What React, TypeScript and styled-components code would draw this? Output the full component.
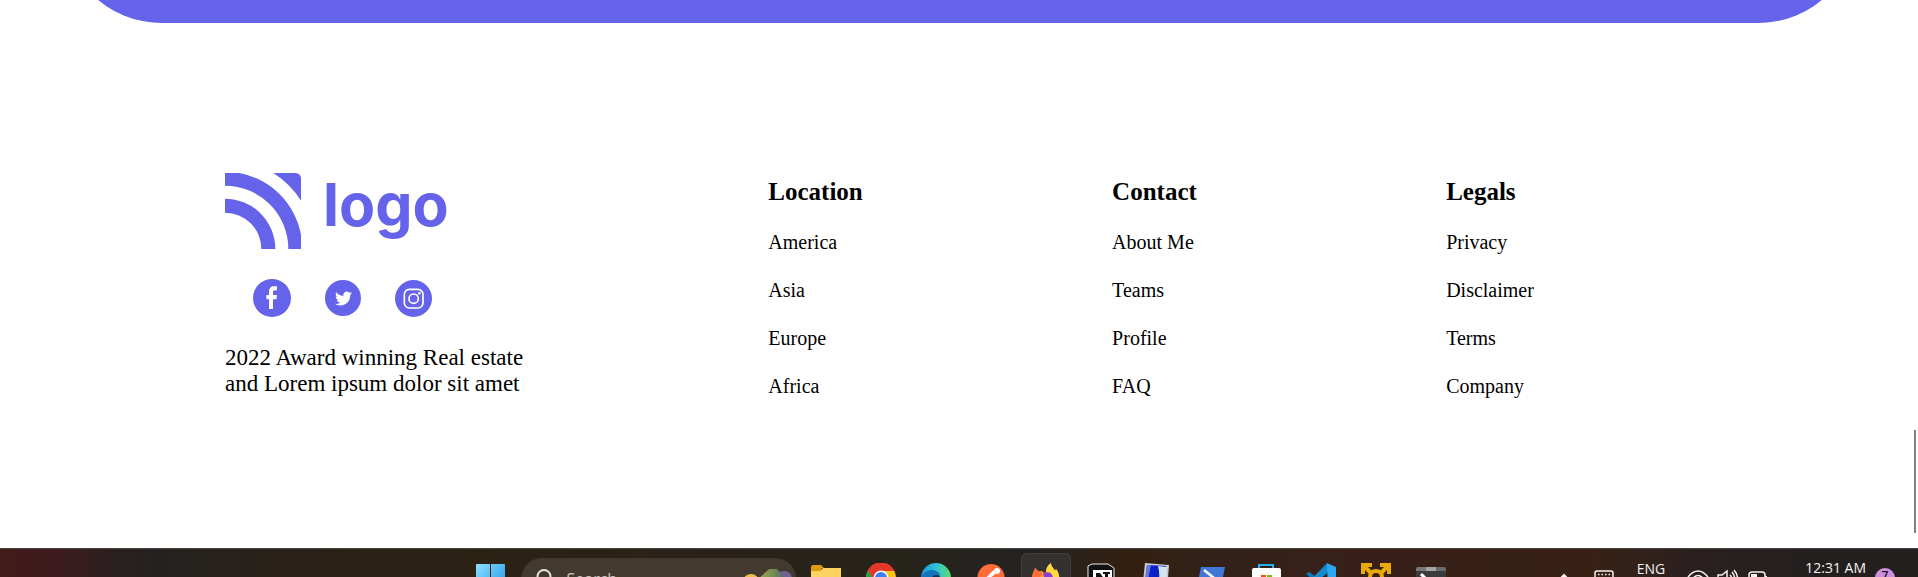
import React from "react";
import styled, { createGlobalStyle } from "styled-components";
import { FaTwitter } from "react-icons/fa";

const brand = "#6563ea";

const GlobalStyle = createGlobalStyle`
  *, *::before, *::after { box-sizing: border-box; }
  body {
    margin: 0;
    background: #fff;
    color: #000;
    font-family: "Liberation Serif", "Times New Roman", serif;
    overflow: hidden;
  }
  h2, p, ul { margin: 0; padding: 0; }
  ul { list-style: none; }
  button { border: 0; padding: 0; background: none; font: inherit; color: inherit; }
  svg { display: block; flex: none; }
`;

const Banner = styled.div`
  height: 23px;
  margin: 0 60px 0 62px;
  overflow: hidden;
  display: flex;
  align-items: flex-end;
`;

const BannerFill = styled.div`
  flex: 1;
  height: 200px;
  border-radius: 100px;
  background: ${brand};
`;

const Footer = styled.footer`
  display: flex;
  gap: 13vw;
  padding: 150px 64px 150px 225px;
`;

const Brand = styled.section`
  flex: none;
  width: 294px;
  display: flex;
  flex-direction: column;
`;

const Logo = styled.a`
  display: flex;
  align-items: flex-start;
  gap: 22px;
  height: 76px;
  color: ${brand};
  text-decoration: none;
`;

const LogoText = styled.span`
  font: 700 59px/64px Inter, sans-serif;
`;

const Socials = styled.nav`
  display: flex;
  align-items: center;
  gap: 34px;
  height: 38px;
  margin: 30px 0 28px;
  padding-left: 28px;
`;

const SocialLink = styled.a<{ $size: number }>`
  display: flex;
  align-items: center;
  justify-content: center;
  width: ${(p) => p.$size}px;
  height: ${(p) => p.$size}px;
  border-radius: 50%;
  background: ${brand};
  color: #fff;
`;

const Blurb = styled.p`
  font-size: 23px;
  line-height: 26px;
  white-space: nowrap;
`;

const Column = styled.nav`
  flex: none;
  padding-top: 5px;
`;

const ColumnTitle = styled.h2`
  font-size: 25px;
  line-height: 28px;
  font-weight: 700;
`;

const LinkList = styled.ul`
  display: flex;
  flex-direction: column;
  gap: 24px;
  margin-top: 24px;
  width: 0;
  white-space: nowrap;
`;

const FooterLink = styled.a`
  display: block;
  font-size: 20px;
  line-height: 24px;
  color: inherit;
  text-decoration: none;
`;

const ScrollThumb = styled.div`
  position: fixed;
  right: 2px;
  bottom: 44px;
  width: 2px;
  height: 103px;
  background: #808080;
`;

const Taskbar = styled.div`
  display: grid;
  grid-template-columns: 1fr auto 1fr;
  height: 29px;
  padding-left: 3px;
  overflow: hidden;
  border-top: 1px solid #4b4542;
  background: linear-gradient(90deg, #421b19 0%, #3d1b1f 3%, #2a201f 6%, #242220 8%, #2b2118 16%, #2c2214 25%, #2a221a 38%, #27241c 47%, #242322 54%, #34200f 59%, #33211a 63%, #38201a 70%, #372014 80%, #382114 83%, #2b2020 88%, #231f1f 95%, #231f1f 100%);
  color: #f4f1f0;
  font-family: "Open Sans", sans-serif;
`;

const Apps = styled.div`
  grid-column: 2;
  display: flex;
  align-items: flex-start;
  gap: 5px;
  padding-top: 4px;
`;

const AppButton = styled.button<{ $active?: boolean }>`
  display: flex;
  justify-content: center;
  width: 50px;
  height: 50px;
  padding-top: 10px;
  border-radius: 6px;
  background: ${(p) => (p.$active ? "#343231" : "transparent")};
  box-shadow: ${(p) => (p.$active ? "inset 0 0 0 1px #403d3c" : "none")};
`;

const Search = styled.label`
  display: flex;
  align-items: flex-start;
  width: 275px;
  height: 42px;
  margin-top: 5px;
  padding: 11px 2px 0 15px;
  border-radius: 21px;
  background: #433a2f;
`;

const SearchInput = styled.input`
  flex: 1;
  min-width: 0;
  height: 20px;
  margin: 0;
  padding: 0 0 0 15px;
  border: 0;
  background: none;
  font: 16px/20px "Open Sans", sans-serif;
  outline: 0;
  &::placeholder { color: #c9c5c1; opacity: 1; }
`;

const Tray = styled.div`
  grid-column: 3;
  justify-self: end;
  display: flex;
  align-items: flex-start;
  padding-right: 23px;
  font-size: 14px;
  line-height: 20px;
`;

const TrayButton = styled.button<{ $gap?: number; $top: number }>`
  margin-left: ${(p) => p.$gap ?? 0}px;
  padding-top: ${(p) => p.$top}px;
  white-space: nowrap;
`;

const Badge = styled.span`
  display: block;
  width: 20px;
  height: 20px;
  border-radius: 50%;
  background: #d08fdd;
  color: #1a1418;
  font-size: 12px;
  font-weight: 600;
  line-height: 16px;
  text-align: center;
`;

const columns = [
  { title: "Location", links: ["America", "Asia", "Europe", "Africa"] },
  { title: "Contact", links: ["About Me", "Teams", "Profile", "FAQ"] },
  { title: "Legals", links: ["Privacy", "Disclaimer", "Terms", "Company"] },
];

const LogoMark = () => (
  <svg width="76" height="76" viewBox="0 0 228 228" fill="currentColor" aria-hidden="true">
    <path d="M0 0H43A232 232 0 0 1 228 185V228H190A190 190 0 0 0 0 38Z" />
    <path d="M0 77A151 151 0 0 1 151 228H109A109 109 0 0 0 0 119Z" />
    <path d="M145 0H212A16 16 0 0 1 228 16V83A270 270 0 0 0 145 0Z" />
  </svg>
);

const FacebookIcon = () => (
  <svg width="38" height="38" viewBox="0 0 114 114" fill="#fff" aria-hidden="true">
    <path d="M48 90V61H40V48H48V39C48 28 54 22 63 22H72V34H67C62 34 60 36 60 40V48H72L70 61H60V90Z" />
  </svg>
);

const InstagramIcon = () => (
  <svg width="37" height="37" viewBox="0 0 111 111" fill="none" stroke="#fff" strokeWidth="5" aria-hidden="true">
    <rect x="28" y="28" width="56" height="56" rx="15" />
    <circle cx="56" cy="56" r="14" />
    <circle cx="73" cy="40" r="4" fill="#fff" stroke="none" />
  </svg>
);

const icon = (body: React.ReactNode, viewBox = "0 0 30 30") => (
  <svg width="30" height="30" viewBox={viewBox} aria-hidden="true">{body}</svg>
);

const apps: { name: string; active?: boolean; art: React.ReactNode }[] = [
  {
    name: "File Explorer",
    art: icon(<><path d="M0 4a2 2 0 0 1 2-2h8l3 3h-2l-2 4H0Z" fill="#dd9c0b" /><path d="M0 8h9l3-3h18v22H0Z" fill="#fdd45f" /></>),
  },
  {
    name: "Chrome",
    art: icon(<><circle cx="15" cy="15" r="15" fill="#f9c513" /><path d="M1.500 8A15 15 0 0 1 28.500 8H15L9 18Z" fill="#e3372b" /><path d="M2 7.500A15 15 0 0 0 14 30L9 18Z" fill="#2b9b48" /><circle cx="15" cy="15" r="7.500" fill="#fff" /><circle cx="15" cy="15" r="6" fill="#3c7ff0" /></>),
  },
  {
    name: "Edge",
    art: icon(<><defs><linearGradient id="edge" x1="0" x2="1"><stop offset="0" stopColor="#1a94dd" /><stop offset=".5" stopColor="#2fc1d6" /><stop offset="1" stopColor="#5cde67" /></linearGradient></defs><circle cx="15" cy="15" r="15" fill="url(#edge)" /><path d="M0 16C1 10 6 7 12 7C18 8 20 12 19 16Z" fill="#1273bd" /><path d="M11 15C11 12 18 10 19 15Z" fill="#14334d" /></>),
  },
  {
    name: "Postman",
    art: icon(<><circle cx="15" cy="14.500" r="13.500" fill="#ff6c37" /><circle cx="21" cy="8" r="3" fill="#fff" /><path d="M19 10l-9 7M18 8l-7 7" stroke="#fff" strokeWidth="2" /></>),
  },
  {
    name: "Firefox",
    active: true,
    art: icon(<><path d="M1 15C1 11 3 9 4 5L7 8H11L13 10L15 9C15 5 17 2 20 0C20 4 23 5 24 8L25 6C28 10 29 15 28 20H1Z" fill="#ff9c2c" /><path d="M20 0C20 4 23 5 24 8L25 6C28 10 29 15 28 20H23C24 12 17 9 15 9C15 5 17 2 20 0Z" fill="#ffd93f" /><path d="M1 15C1 11 3 9 4 5L7 8H10L11 12L6 16Z" fill="#ff6b34" /><path d="M12 11C17 7 22 10 22 16H14Z" fill="#883bd8" /></>),
  },
  {
    name: "Notion",
    art: icon(<><path d="M2 3L6 1L22 1L28 5V28H2Z" fill="#111" stroke="#eee" /><path d="M7 7H26V28H7Z" fill="#fff" /><path d="M10 10H14L19 17V11H17V9H24V11H22V28H19L13 18V28H10V12Z" fill="#111" /></>),
  },
  {
    name: "Database console",
    art: icon(<><path d="M4 0L28 2L26 28H1Z" fill="#c9c9d0" /><path d="M6 2L25 3L24 28H3Z" fill="#0b22c9" /><path d="M17 3L26 4L24 28H14C19 18 19 11 17 3Z" fill="#d7e2f4" /><path d="M6 2L10 2L7 17L3 22Z" fill="#6476e0" /></>),
  },
  {
    name: "PowerShell",
    art: icon(<><path d="M5 4H29L24 28H0Z" fill="#3f78d4" /><path d="M8 7L18 15L6 24" fill="none" stroke="#fff" strokeWidth="2.500" /></>),
  },
  {
    name: "Microsoft Store",
    art: icon(<><path d="M8 7V2H22V7" fill="none" stroke="#27b1ea" strokeWidth="2" /><rect x="1" y="5" width="29" height="25" rx="2" fill="#fff" /><path d="M10 12h5v5h-5z" fill="#ee4f24" /><path d="M16 12h5v5h-5z" fill="#7db904" /></>),
  },
  {
    name: "VS Code",
    art: icon(<><path d="M0 11L3 9L30 27L22 30Z" fill="#0b78bd" /><path d="M1 21L21 0L24 8L5 23Z" fill="#148ad0" /><path d="M21 0L30 4V26L22 30Z" fill="#2aa7ef" /></>),
  },
  {
    name: "Network tool",
    art: icon(<><g fill="#e9ab06"><path d="M0 0H11V4H7L11 8L8 11L4 7V11H0Z" /><path d="M30 0H19V4H23L19 8L22 11L26 7V11H30Z" /></g><circle cx="15" cy="14" r="6" fill="none" stroke="#e9ab06" strokeWidth="4" /></>),
  },
  {
    name: "Terminal",
    art: icon(<><path d="M0 6a2 2 0 0 1 2-2h8v4H0Z" fill="#777" /><path d="M10 4h10v4H10Z" fill="#a4a4a4" /><path d="M20 4h8a2 2 0 0 1 2 2v2H20Z" fill="#6b6b6b" /><path d="M0 8H30V28H0Z" fill="#3c3b3b" /><path d="M5 11l6 6-6 6" fill="none" stroke="#fff" strokeWidth="3" /></>),
  },
];

const App = () => (
  <>
    <GlobalStyle />
    <main>
      <Banner><BannerFill /></Banner>
      <Footer>
        <Brand>
          <Logo href="#">
            <LogoMark />
            <LogoText>logo</LogoText>
          </Logo>
          <Socials aria-label="Social media">
            <SocialLink $size={38} href="#" aria-label="Facebook"><FacebookIcon /></SocialLink>
            <SocialLink $size={36} href="#" aria-label="Twitter"><FaTwitter size={17} /></SocialLink>
            <SocialLink $size={37} href="#" aria-label="Instagram"><InstagramIcon /></SocialLink>
          </Socials>
          <Blurb>2022 Award winning Real estate<br />and Lorem ipsum dolor sit amet</Blurb>
        </Brand>
        {columns.map((column) => (
          <Column key={column.title} aria-label={column.title}>
            <ColumnTitle>{column.title}</ColumnTitle>
            <LinkList>
              {column.links.map((link) => (
                <li key={link}><FooterLink href="#">{link}</FooterLink></li>
              ))}
            </LinkList>
          </Column>
        ))}
      </Footer>
    </main>
    <ScrollThumb />
    <Taskbar>
      <Apps>
        <AppButton aria-label="Start">
          {icon(<><defs><linearGradient id="win" x1="0" x2="1" y1="0" y2="1"><stop offset="0" stopColor="#8fe1fc" /><stop offset="1" stopColor="#1491e8" /></linearGradient></defs><path d="M1 2a1 1 0 0 1 1-1h13v14H1ZM16 1h13a1 1 0 0 1 1 1v13H16ZM1 16h14v14H1ZM16 16h14v14H16Z" fill="url(#win)" /></>, "1 0 30 30")}
        </AppButton>
        <Search>
          <svg width="16" height="18" viewBox="0 0 16 18" fill="none" stroke="#e6e3e0" strokeWidth="2" aria-hidden="true"><circle cx="8" cy="7.500" r="6.500" /><path d="M4 12l-4 5" /></svg>
          <SearchInput type="text" placeholder="Search" aria-label="Search" />
          <svg width="52" height="31" viewBox="0 0 52 31" aria-hidden="true">
            <defs><linearGradient id="hill" x1="0" x2="1"><stop offset="0" stopColor="#b7ad49" /><stop offset=".5" stopColor="#7c944f" /><stop offset="1" stopColor="#4f6075" /></linearGradient></defs>
            <circle cx="42" cy="10" r="8" fill="#6c6595" />
            <path d="M15 11L26 1Q31-3 36 1L46 12V31H10Z" fill="url(#hill)" />
            <circle cx="9" cy="13" r="8" fill="#efbd4c" />
          </svg>
        </Search>
        {apps.map((app) => (
          <AppButton key={app.name} $active={app.active} aria-label={app.name}>{app.art}</AppButton>
        ))}
      </Apps>
      <Tray>
        <TrayButton $top={24} aria-label="Hidden icons">
          <svg width="12" height="8" viewBox="0 0 12 8" fill="none" stroke="currentColor" strokeWidth="2"><path d="M1 7l5-5 5 5" /></svg>
        </TrayButton>
        <TrayButton $top={21} $gap={24} aria-label="Touch keyboard">
          <svg width="20" height="16" viewBox="0 0 20 16" fill="none" stroke="currentColor" strokeWidth="1.500"><rect x="1" y="1" width="18" height="14" rx="2" /><path d="M4 4.500h13M4 8h13" strokeDasharray="1.500 2" /></svg>
        </TrayButton>
        <TrayButton $top={10} $gap={23}>ENG</TrayButton>
        <TrayButton $top={21} $gap={22} aria-label="Network">
          <svg width="22" height="16" viewBox="0 0 22 16" fill="none" stroke="currentColor" strokeWidth="1.500"><path d="M1 7Q11-5 21 7M4.500 10Q11 1 17.500 10M8 13Q11 8 14 13" /></svg>
        </TrayButton>
        <TrayButton $top={20} $gap={8} aria-label="Volume">
          <svg width="22" height="18" viewBox="0 0 22 18" fill="none" stroke="currentColor" strokeWidth="1.500"><path d="M1 6h4l5-4v14l-5-4H1ZM13 6q3 3 0 6M15 3q5 6 0 12M17 1q7 8 0 16" /></svg>
        </TrayButton>
        <TrayButton $top={22} $gap={9} aria-label="Battery">
          <svg width="20" height="14" viewBox="0 0 20 14" fill="none" stroke="currentColor" strokeWidth="1.500"><rect x="1" y="1" width="16" height="12" rx="3" /><path d="M3 3h6v8H3Z" fill="currentColor" stroke="none" /><path d="M18 5v4" strokeWidth="2" /></svg>
        </TrayButton>
        <TrayButton $top={9} $gap={37}>12:31 AM</TrayButton>
        <TrayButton $top={19} $gap={9} aria-label="Notifications"><Badge>7</Badge></TrayButton>
      </Tray>
    </Taskbar>
  </>
);

export default App;
